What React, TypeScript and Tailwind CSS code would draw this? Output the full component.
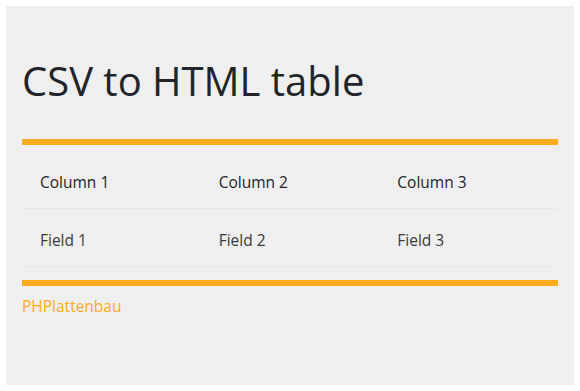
export default function App() {
  const headers = ['Column 1', 'Column 2', 'Column 3'];
  const fields = ['Field 1', 'Field 2', 'Field 3'];

  return (
    <div className="w-[580px] h-[391px] bg-white p-[6px] font-['Open_Sans',sans-serif]">
      <div className="h-full bg-[#efefef] px-4">
        <h1 className="pt-[49px] h-[133px] text-[40px] leading-[52px] text-[#212529]">CSV to HTML table</h1>
        <div className="h-[6px] bg-[#fcab1c]" />
        <div className="grid grid-cols-3 h-[64px] pt-[27px] border-b border-[#e7e7e7] text-[15.5px] leading-[20px] text-[#212529]">
          {headers.map((h) => (
            <div key={h} className="pl-[18px]">{h}</div>
          ))}
        </div>
        <div className="grid grid-cols-3 h-[58px] pt-[21px] border-b border-[#e7e7e7] text-[15.5px] leading-[20px] text-[#3a3a3a]">
          {fields.map((f) => (
            <div key={f} className="pl-[18px]">{f}</div>
          ))}
        </div>
        <div className="mt-[13px] h-[6px] bg-[#fcab1c]" />
        <div className="pt-[10px] text-[15.5px] leading-[20px] text-[#fcab1c]">PHPlattenbau</div>
      </div>
    </div>
  );
}
